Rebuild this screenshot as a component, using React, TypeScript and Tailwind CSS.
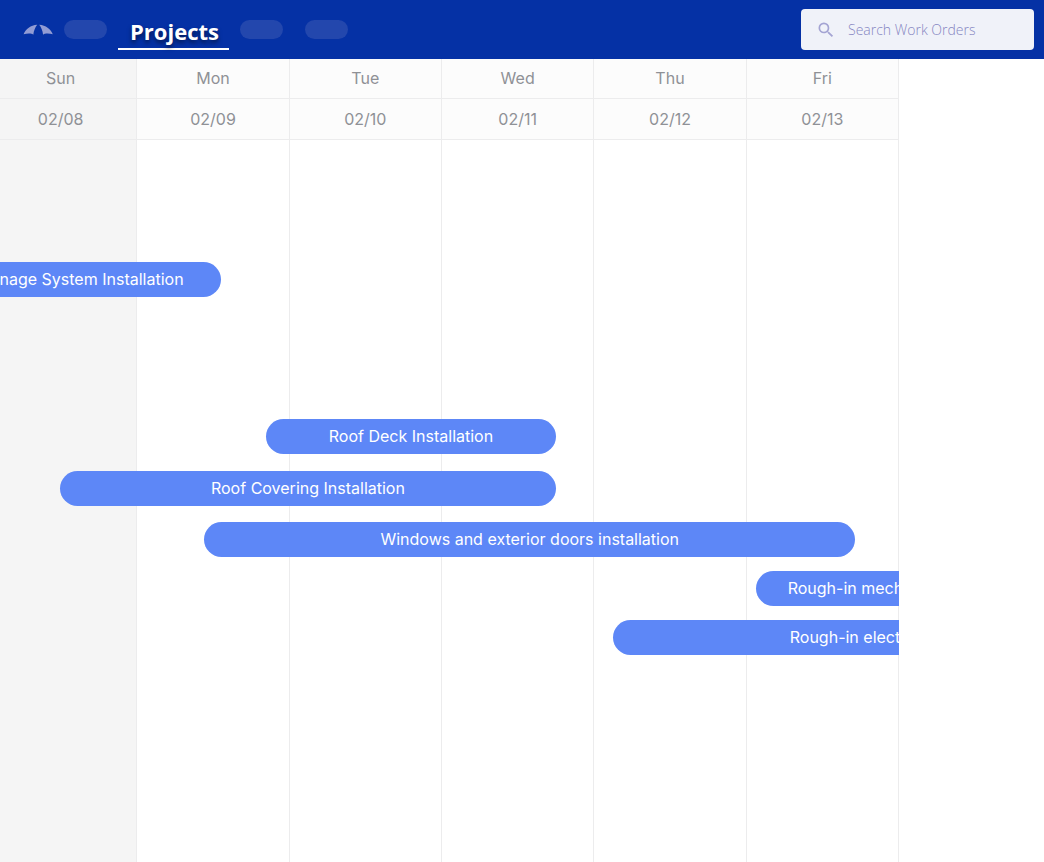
const DAYS = [
  { day: "Sun", date: "02/08", off: true },
  { day: "Mon", date: "02/09", off: false },
  { day: "Tue", date: "02/10", off: false },
  { day: "Wed", date: "02/11", off: false },
  { day: "Thu", date: "02/12", off: false },
  { day: "Fri", date: "02/13", off: false },
];

// start and end are counted in days from the first visible column
const TASKS = [
  { name: "Drainage System Installation", start: -0.35, end: 1.549, gap: "mt-[122px]" },
  { name: "Roof Deck Installation", start: 1.845, end: 3.748, gap: "mt-[122px]" },
  { name: "Roof Covering Installation", start: 0.492, end: 3.748, gap: "mt-[17px]" },
  { name: "Windows and exterior doors installation", start: 1.438, end: 5.714, gap: "mt-4" },
  { name: "Rough-in mechanical", start: 5.064, end: 6.525, gap: "mt-3.5" },
  { name: "Rough-in electrical", start: 4.123, end: 7.38, gap: "mt-3.5" },
];

const percent = (days: number) => `${(days / DAYS.length) * 100}%`;

function Logo() {
  return (
    <svg viewBox="0 0 30 12" className="h-3 w-[30px] shrink-0 fill-[#929cd4]" aria-hidden="true">
      <path d="M.6 10.300C3 5 7.500 1.200 14.200.8 12.200 3.400 10.800 6.600 10.300 10.700 9.200 9.900 7.800 9.600 6 9.600 4.200 9.600 2.300 9.800.6 10.300Z" />
      <path d="M29.800 10.300C27.400 5 22.900 1.200 16.200.8 18.200 3.400 19.600 6.600 20.100 10.700 21.200 9.900 22.600 9.600 24.400 9.600 26.200 9.600 28.100 9.800 29.800 10.300Z" />
    </svg>
  );
}

function Placeholder() {
  return <span className="h-[19px] w-[43px] shrink-0 rounded-full bg-[#2347ad]" aria-hidden="true" />;
}

function TopBar() {
  return (
    <header className="flex h-[59px] items-center justify-between bg-[#0531a5] pr-2.5 pl-[23px]">
      <nav className="flex items-center">
        <Logo />
        <div className="ml-[11px] flex items-center gap-[11px]">
          <Placeholder />
          <a
            href="#projects"
            aria-current="page"
            className="flex h-[41px] items-center border-b-2 border-white pt-1 pr-2.5 pl-3 font-['Open_Sans','Noto_Sans',sans-serif] text-[22px] leading-8 font-bold text-white [text-shadow:0_3px_4px_rgba(0,0,0,0.5)]"
          >
            Projects
          </a>
          <Placeholder />
        </div>
        <div className="ml-[22px] flex">
          <Placeholder />
        </div>
      </nav>
      <label className="flex h-[41px] w-[233px] items-center gap-3 rounded bg-[#f0f2f9] pl-[15px]">
        <svg viewBox="0 0 24 24" className="size-5 shrink-0 fill-[#a4a4d3]" aria-hidden="true">
          <path d="M15.500 14h-.79l-.28-.27A6.470 6.470 0 0 0 16 9.500 6.500 6.500 0 1 0 9.500 16c1.610 0 3.090-.59 4.230-1.570l.27.28v.79l5 4.990L20.490 19l-4.990-5zm-6 0C7.010 14 5 11.990 5 9.500S7.010 5 9.500 5 14 7.010 14 9.500 11.990 14 9.500 14z" />
        </svg>
        <input
          type="search"
          aria-label="Search Work Orders"
          placeholder="Search Work Orders"
          className="w-full min-w-0 bg-transparent font-['Open_Sans','Noto_Sans',sans-serif] text-sm font-light text-[#6b6ba8] outline-none placeholder:text-[#8686c2]"
        />
      </label>
    </header>
  );
}

function Timeline() {
  return (
    <main className="mr-[145px] flex flex-1 flex-col overflow-hidden">
      <div className="-ml-[15px] flex flex-1 flex-col">
        <table className="w-full table-fixed border-separate border-spacing-0 text-[#8f9196]">
          <thead>
            <tr>
              {DAYS.map((d) => (
                <th
                  key={d.day}
                  scope="col"
                  className={`h-10 border-r border-b border-[#ececed] p-0 pb-0.5 text-center font-normal ${d.off ? "bg-[#f5f5f5]" : "bg-[#fcfcfc]"}`}
                >
                  {d.day}
                </th>
              ))}
            </tr>
          </thead>
          <tbody>
            <tr>
              {DAYS.map((d) => (
                <td
                  key={d.date}
                  className={`h-[41px] border-r border-b border-[#ececed] p-0 text-center ${d.off ? "bg-[#f5f5f5]" : "bg-[#fcfcfc]"}`}
                >
                  {d.date}
                </td>
              ))}
            </tr>
          </tbody>
        </table>
        <div className="grid flex-1">
          <div className="col-start-1 row-start-1 grid grid-cols-6" aria-hidden="true">
            {DAYS.map((d) => (
              <div
                key={d.day}
                className={`border-r border-[#ececed] ${d.off ? "bg-[#f5f5f5]" : "bg-white"}`}
              />
            ))}
          </div>
          <ul className="z-10 col-start-1 row-start-1 min-w-0">
            {TASKS.map((t) => (
              <li
                key={t.name}
                className={`flex h-[35px] items-center justify-center rounded-full bg-[#5d87f7] pb-0.5 whitespace-nowrap text-white ${t.gap}`}
                style={{ marginLeft: percent(t.start), width: percent(t.end - t.start) }}
              >
                {t.name}
              </li>
            ))}
          </ul>
        </div>
      </div>
    </main>
  );
}

export default function App() {
  return (
    <div className="flex min-h-screen flex-col bg-white font-['Inter',sans-serif] text-base">
      <TopBar />
      <Timeline />
    </div>
  );
}
